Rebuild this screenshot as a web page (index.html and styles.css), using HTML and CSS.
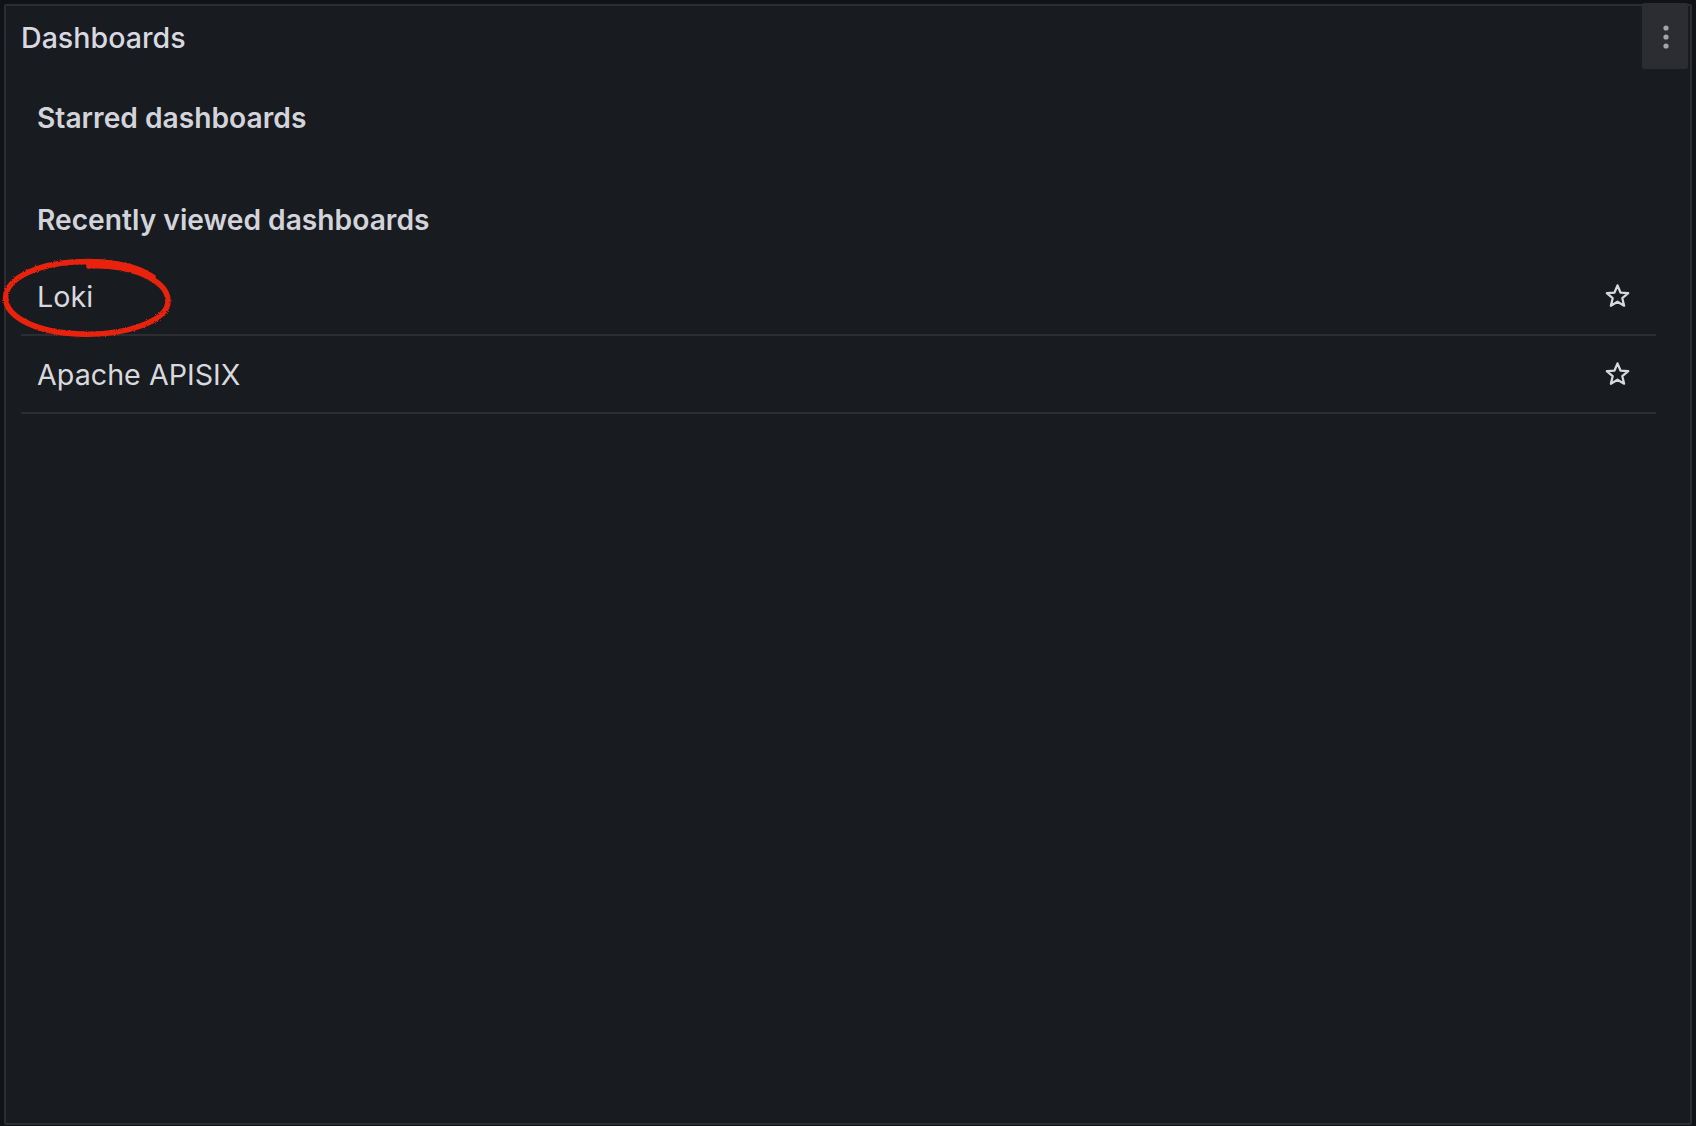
FILE: index.html
```html
<!DOCTYPE html>
<html lang="en">
<head>
<meta charset="utf-8">
<title>Dashboards</title>
<link rel="stylesheet" href="styles.css">
</head>
<body>
<div class="panel">
  <div class="panel-header">
    <h2 class="panel-title">Dashboards</h2>
    <button class="menu-btn" aria-label="Menu">
      <svg width="8" height="26" viewBox="0 0 8 26"><circle cx="4" cy="4" r="2.6"/><circle cx="4" cy="13" r="2.6"/><circle cx="4" cy="22" r="2.6"/></svg>
    </button>
  </div>
  <div class="panel-body">
    <section class="section section-starred">
      <h3 class="section-title">Starred dashboards</h3>
      <ul class="dash-list"></ul>
    </section>
    <section class="section">
      <h3 class="section-title section-title-recent">Recently viewed dashboards</h3>
      <ul class="dash-list">
        <li class="dash-item">
          <span class="dash-name">Loki</span>
          <svg class="star" width="27" height="27" viewBox="0 0 24 24"><path d="M12 3 L14.65 9.36 L21.51 9.91 L16.28 14.39 L17.88 21.09 L12 17.5 L6.12 21.09 L7.72 14.39 L2.49 9.91 L9.35 9.36 Z"/></svg>
          <svg class="annotation" width="172" height="84" viewBox="0 0 172 84">
            <defs>
              <filter id="rough" x="-10%" y="-10%" width="120%" height="120%">
                <feTurbulence type="fractalNoise" baseFrequency="0.9" numOctaves="2" seed="3"/>
                <feDisplacementMap in="SourceGraphic" scale="2.6"/>
              </filter>
            </defs>
            <path filter="url(#rough)" d="M152 20 C134 7 102 3 72 5 C40 7 9 19 5 37 C1 57 30 75 78 77 C125 79 167 64 167 44 C167 31 155 23 139 16 C125 11 105 8 88 9"/>
          </svg>
        </li>
        <li class="dash-item">
          <span class="dash-name">Apache APISIX</span>
          <svg class="star" width="27" height="27" viewBox="0 0 24 24"><path d="M12 3 L14.65 9.36 L21.51 9.91 L16.28 14.39 L17.88 21.09 L12 17.5 L6.12 21.09 L7.72 14.39 L2.49 9.91 L9.35 9.36 Z"/></svg>
        </li>
      </ul>
    </section>
  </div>
</div>
</body>
</html>
```

FILE: styles.css
```css
html, body {
  margin: 0;
  padding: 0;
  background: #111217;
}
body {
  padding: 4px 4px 1px 4px;
  font-family: Inter, "Noto Sans", "Liberation Sans", sans-serif;
  color: #d5d6dd;
}
.panel {
  box-sizing: border-box;
  height: 1121px;
  background: #181b1f;
  border: 2px solid #2a2d32;
  border-radius: 2px;
  display: flex;
  flex-direction: column;
}
.panel-header {
  display: flex;
  align-items: flex-start;
  justify-content: space-between;
  height: 63px;
  padding-left: 15px;
}
.panel-title {
  margin: 0;
  font-size: 28.6px;
  font-weight: 500;
  line-height: 63px;
  color: #d8d9e0;
  letter-spacing: 0;
}
.menu-btn {
  margin-top: -3px;
  margin-right: 2px;
  width: 46px;
  height: 66px;
  border: none;
  border-radius: 2px;
  background: #2b2d32;
  display: flex;
  align-items: center;
  justify-content: center;
  padding: 2px 0 0 1px;
}
.menu-btn svg circle {
  fill: #a3a5ab;
}
.panel-body {
  padding: 29px 34px 0 15px;
}
.section {
  margin: 0;
}
.section-starred {
  margin-bottom: 62px;
}
.section-title {
  margin: 0 0 18px 0;
  padding-left: 16px;
  font-size: 28.2px;
  font-weight: 600;
  line-height: 40px;
  color: #d3d4db;
}
.dash-list {
  list-style: none;
  margin: 0;
  padding: 0;
}
.dash-item {
  position: relative;
  display: flex;
  align-items: center;
  justify-content: space-between;
  height: 76px;
  padding: 0 25px 0 16px;
  border-bottom: 2px solid #2a2d32;
}
.dash-name {
  font-size: 28.7px;
  font-weight: 400;
  color: #d8d9df;
}
.star {
  margin-top: -2px;
}
.star path {
  fill: none;
  stroke: #d8d9de;
  stroke-width: 2;
  stroke-linejoin: round;
}
.annotation {
  position: absolute;
  left: -20px;
  top: -1px;
  pointer-events: none;
}
.annotation path {
  fill: none;
  stroke: #e8240f;
  stroke-width: 5.5;
  stroke-linecap: round;
}
```
